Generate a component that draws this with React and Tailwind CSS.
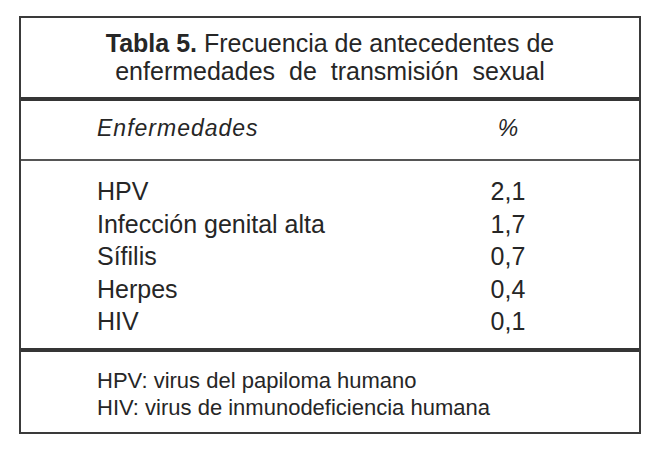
import React from 'react';

const rows = [
  ['HPV', '2,1'],
  ['Infección genital alta', '1,7'],
  ['Sífilis', '0,7'],
  ['Herpes', '0,4'],
  ['HIV', '0,1'],
];

const App = () => {
  return (
    <div className="w-[660px] h-[454px] bg-white pt-[16px] pl-[19px] text-[#262626] font-['Liberation_Sans',Arial,sans-serif]">
      <div className="w-[622px] border-2 border-[#3a3a3a]">
        <div className="pt-[11px] pb-[12px] text-center text-[25px] leading-[28px]">
          <div><span className="font-bold">Tabla 5.</span> Frecuencia de antecedentes de</div>
          <div className="[word-spacing:7px]">enfermedades de transmisión sexual</div>
        </div>
        <div className="h-[4px] bg-[#353535]" />

        <div className="grid grid-cols-[1fr_60px] pl-[76px] pr-[101px] pt-[15px] pb-[19px] text-[23px] leading-[24px] italic">
          <span className="tracking-[1px]">Enfermedades</span>
          <span className="text-center">%</span>
        </div>
        <div className="h-[2px] bg-[#555]" />

        <div className="pl-[76px] pr-[101px] pt-[14px] pb-[10px] text-[25px] leading-[32.5px]">
          {rows.map(([name, value]) => (
            <div key={name} className="grid grid-cols-[1fr_60px]">
              <span>{name}</span>
              <span className="text-center">{value}</span>
            </div>
          ))}
        </div>
        <div className="h-[4px] bg-[#353535]" />

        <div className="pl-[76px] pt-[15px] pb-[11px] text-[22px] leading-[27px]">
          <div>HPV: virus del papiloma humano</div>
          <div>HIV: virus de inmunodeficiencia humana</div>
        </div>
      </div>
    </div>
  );
};

export default App;
